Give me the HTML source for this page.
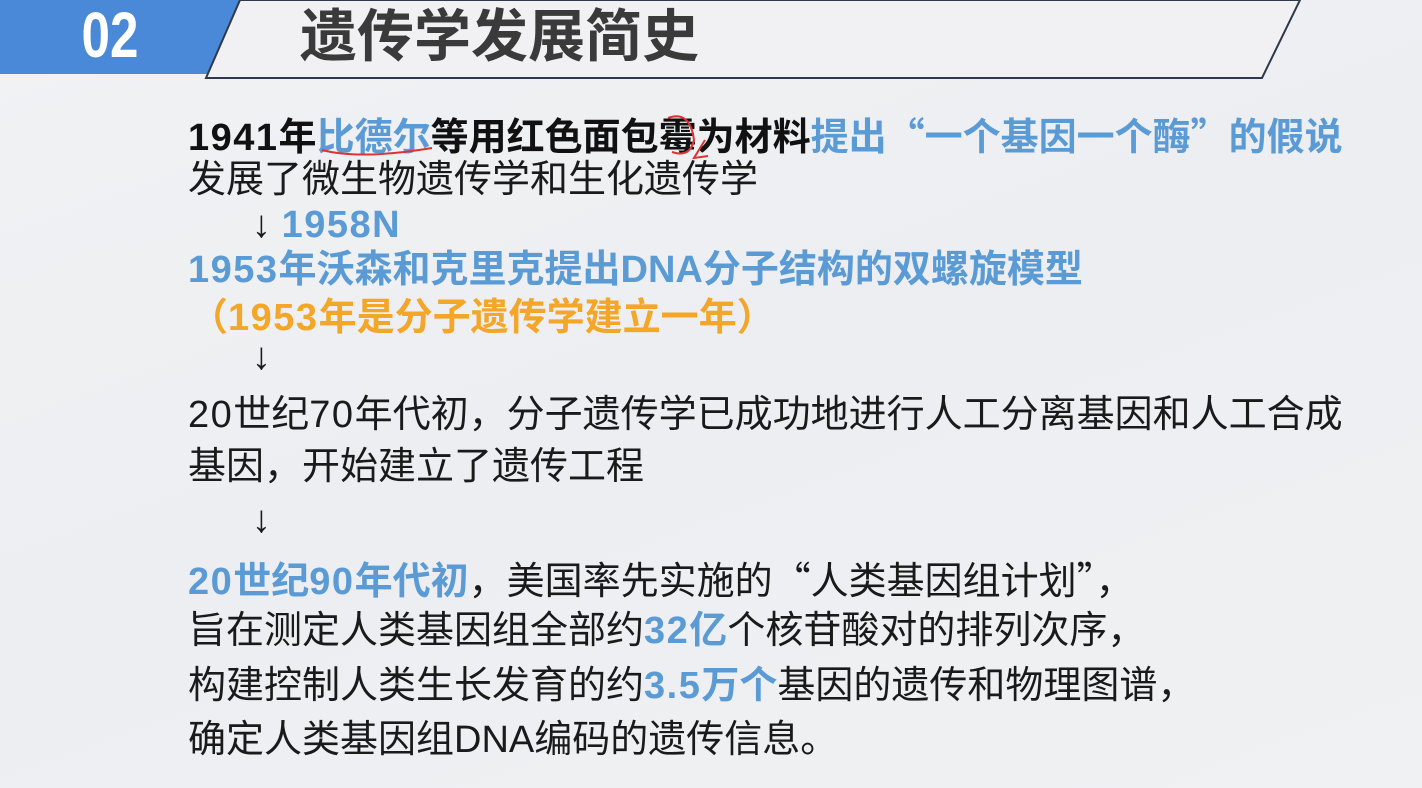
<!DOCTYPE html>
<html><head><meta charset="utf-8"><style>
html,body{margin:0;padding:0}
body{width:1422px;height:788px;position:relative;overflow:hidden;background:linear-gradient(160deg,#f1f2f4 0%,#eceef1 50%,#f0f1f3 100%);font-family:"Liberation Sans","Noto Sans CJK SC",sans-serif;}
.l{position:absolute;left:188px;white-space:nowrap;font-size:38px;line-height:40px;color:#1a1a1a;letter-spacing:0}
.b{color:#5b9bd5;font-weight:bold}
.k{font-weight:bold;color:#111}
.o{color:#f4a629;font-weight:bold}
.q{font-family:"Noto Sans CJK SC",sans-serif}
.d{letter-spacing:1.5px}
</style></head><body>
<svg width="1422" height="90" style="position:absolute;left:0;top:0">
<polygon points="0,0 240,0 208,74 0,74" fill="#4a89d8"/>
<polygon points="240,0 1300,0 1262,78 206,78" fill="#f1f1f3" stroke="#2e3a4a" stroke-width="2"/>
<g transform="translate(110,0) scale(0.8,1)"><text x="0" y="57" font-family="Liberation Sans,sans-serif" font-weight="bold" font-size="64" fill="#fff" text-anchor="middle">02</text></g>
<text x="300" y="56" font-family="Liberation Sans,Noto Sans CJK SC,sans-serif" font-weight="bold" font-size="57" fill="#3a3a3a">遗传学发展简史</text>
</svg>
<div class="l k" style="top:114px"><span class="d">1941</span>年<span class="b">比德尔</span>等用红色面包霉为材料<span class="b">提出<span class="q">“</span>一个基因一个酶<span class="q">”</span>的假说</span></div>
<div class="l" style="top:160px">发展了微生物遗传学和生化遗传学</div>
<div class="l" style="top:205px;left:252px">↓ <span class="b d">1958N</span></div>
<div class="l b" style="top:250px"><span class="d">1953</span>年沃森和克里克提出DNA分子结构的双螺旋模型</div>
<div class="l o" style="top:298px;left:190px">（<span class="d">1953</span>年是分子遗传学建立一年）</div>
<div class="l" style="top:337px;left:252px">↓</div>
<div class="l" style="top:395px"><span class="d">20</span>世纪<span class="d">70</span>年代初，分子遗传学已成功地进行人工分离基因和人工合成</div>
<div class="l" style="top:447px">基因，开始建立了遗传工程</div>
<div class="l" style="top:500px;left:252px">↓</div>
<div class="l" style="top:558px"><span class="b"><span class="d">20</span>世纪<span class="d">90</span>年代初</span>，美国率先实施的<span class="q">“</span>人类基因组计划<span class="q">”</span>，</div>
<div class="l" style="top:611px">旨在测定人类基因组全部约<span class="b"><span class="d">32</span>亿</span>个核苷酸对的排列次序，</div>
<div class="l" style="top:666px">构建控制人类生长发育的约<span class="b d">3.5</span><span class="b">万个</span>基因的遗传和物理图谱，</div>
<div class="l" style="top:720px">确定人类基因组DNA编码的遗传信息。</div>
<svg width="1422" height="788" style="position:absolute;left:0;top:0">
<path d="M322,150 Q360,160 432,148" stroke="#d33" stroke-width="2" fill="none"/>
<path d="M668,118 Q690,110 694,140 Q690,158 672,152 M705,140 L694,158 L708,156" stroke="#d33" stroke-width="2" fill="none"/>
</svg>
</body></html>
